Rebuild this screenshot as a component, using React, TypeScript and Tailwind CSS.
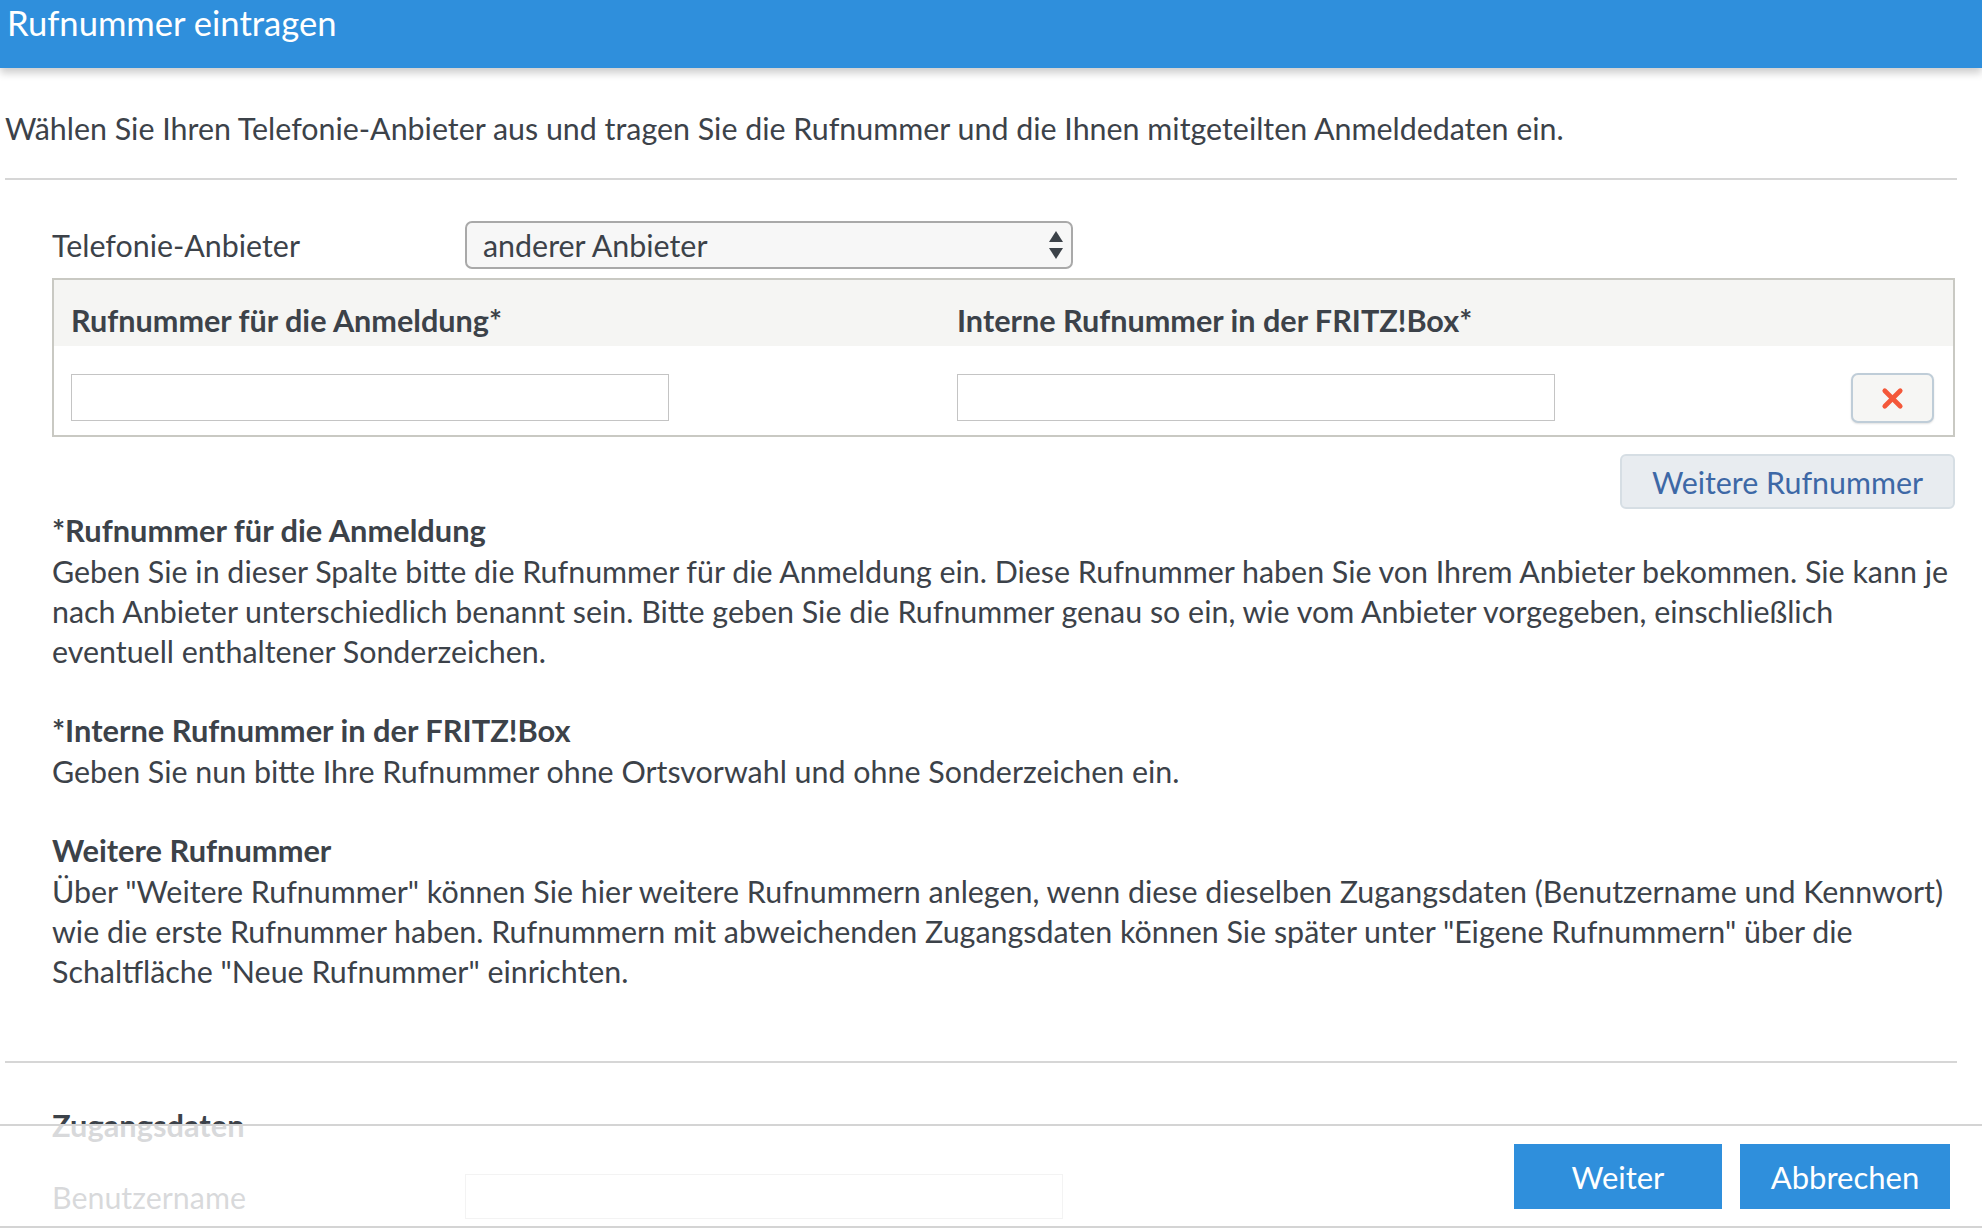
import { X } from "lucide-react";

function SelectArrows() {
  return (
    <svg width="14" height="28" viewBox="0 0 14 28" className="shrink-0">
      <path d="M7 0 L14 11 L0 11 Z" fill="#3c4249" />
      <path d="M0 17 L14 17 L7 28 Z" fill="#3c4249" />
    </svg>
  );
}

export default function App() {
  return (
    <div className="relative h-[1228px] overflow-hidden bg-white font-['Lato',sans-serif] text-[30.4px] leading-[40px] text-[#3c4249]">
      <header className="relative z-10 h-[68px] bg-[#2f8fdc] px-[7px] shadow-[0_5px_8px_rgba(0,0,0,0.2)]">
        <h1 className="text-[34.6px] leading-[46px] text-white">Rufnummer eintragen</h1>
      </header>

      <main className="pl-[5px] pr-[25px]">
        <p className="mt-[40px]">
          Wählen Sie Ihren Telefonie-Anbieter aus und tragen Sie die Rufnummer und die Ihnen mitgeteilten
          Anmeldedaten ein.
        </p>
        <div className="mt-[30px] h-[2px] bg-[#d6d6d6]" />

        <div className="pl-[47px] pr-[2px]">
          <div className="mt-[41px] flex h-[48px] items-center">
            <span className="w-[413px]">Telefonie-Anbieter</span>
            <div className="flex h-[48px] w-[608px] items-center justify-between rounded-[7px] border-2 border-[#a9a9a9] bg-[#f7f7f7] pl-[16px] pr-[8px]">
              <span>anderer Anbieter</span>
              <SelectArrows />
            </div>
          </div>

          <div className="mt-[9px] border-2 border-[#c9c9c3]">
            <div className="flex h-[66px] items-end bg-[#f5f5f3] pb-[5px] pl-[17px] text-[30.6px] font-bold">
              <span className="w-[886px]">Rufnummer für die Anmeldung*</span>
              <span>Interne Rufnummer in der FRITZ!Box*</span>
            </div>
            <div className="flex items-start pb-[12px] pl-[17px] pr-[19px] pt-[28px]">
              <input className="h-[47px] w-[598px] border border-[#c4c4c4] bg-white" />
              <input className="ml-[288px] h-[47px] w-[598px] border border-[#c4c4c4] bg-white" />
              <button className="-mt-[1px] ml-auto flex h-[50px] w-[83px] items-center justify-center rounded-[7px] border-2 border-[#bfcdd8] bg-[#f6f6f4] shadow-[0_1px_2px_rgba(0,0,0,0.12)]">
                <X size={31} strokeWidth={3.6} color="#f4583a" />
              </button>
            </div>
          </div>

          <div className="mt-[17px] flex justify-end">
            <button className="h-[55px] w-[335px] rounded-[6px] border-2 border-[#d6dee4] bg-[#e8ecf0] text-[#3d68a6]">
              Weitere Rufnummer
            </button>
          </div>

          <section className="mt-[2px]">
            <h2 className="text-[30.8px] font-bold">*Rufnummer für die Anmeldung</h2>
            <p>
              Geben Sie in dieser Spalte bitte die Rufnummer für die Anmeldung ein. Diese Rufnummer haben Sie von
              Ihrem Anbieter bekommen. Sie kann je nach Anbieter unterschiedlich benannt sein. Bitte geben Sie die
              Rufnummer genau so ein, wie vom Anbieter vorgegeben, einschließlich eventuell enthaltener
              Sonderzeichen.
            </p>
          </section>
          <section className="mt-[40px]">
            <h2 className="text-[30.8px] font-bold">*Interne Rufnummer in der FRITZ!Box</h2>
            <p>Geben Sie nun bitte Ihre Rufnummer ohne Ortsvorwahl und ohne Sonderzeichen ein.</p>
          </section>
          <section className="mt-[40px]">
            <h2 className="text-[30.8px] font-bold">Weitere Rufnummer</h2>
            <p>
              Über "Weitere Rufnummer" können Sie hier weitere Rufnummern anlegen, wenn diese dieselben Zugangsdaten
              (Benutzername und Kennwort) wie die erste Rufnummer haben. Rufnummern mit abweichenden Zugangsdaten
              können Sie später unter "Eigene Rufnummern" über die Schaltfläche "Neue Rufnummer" einrichten.
            </p>
          </section>
        </div>

        <div className="mt-[70px] h-[2px] bg-[#d6d6d6]" />

        <div className="pl-[47px]">
          <h2 className="mt-[43px] text-[30.8px] font-bold">Zugangsdaten</h2>
          <div className="mt-[28px] flex items-center">
            <span className="w-[413px]">Benutzername</span>
            <input className="h-[45px] w-[598px] border border-[#c4c4c4] bg-white" />
          </div>
        </div>
      </main>

      <footer className="absolute inset-x-0 bottom-0 flex h-[104px] justify-end gap-[18px] border-y-2 border-[#d4d4d4] bg-white/80 pr-[32px] pt-[18px]">
        <button className="h-[65px] w-[208px] bg-[#2f8fdc] text-[31px] text-white">Weiter</button>
        <button className="h-[65px] w-[210px] bg-[#2f8fdc] text-[31px] text-white">Abbrechen</button>
      </footer>
    </div>
  );
}
